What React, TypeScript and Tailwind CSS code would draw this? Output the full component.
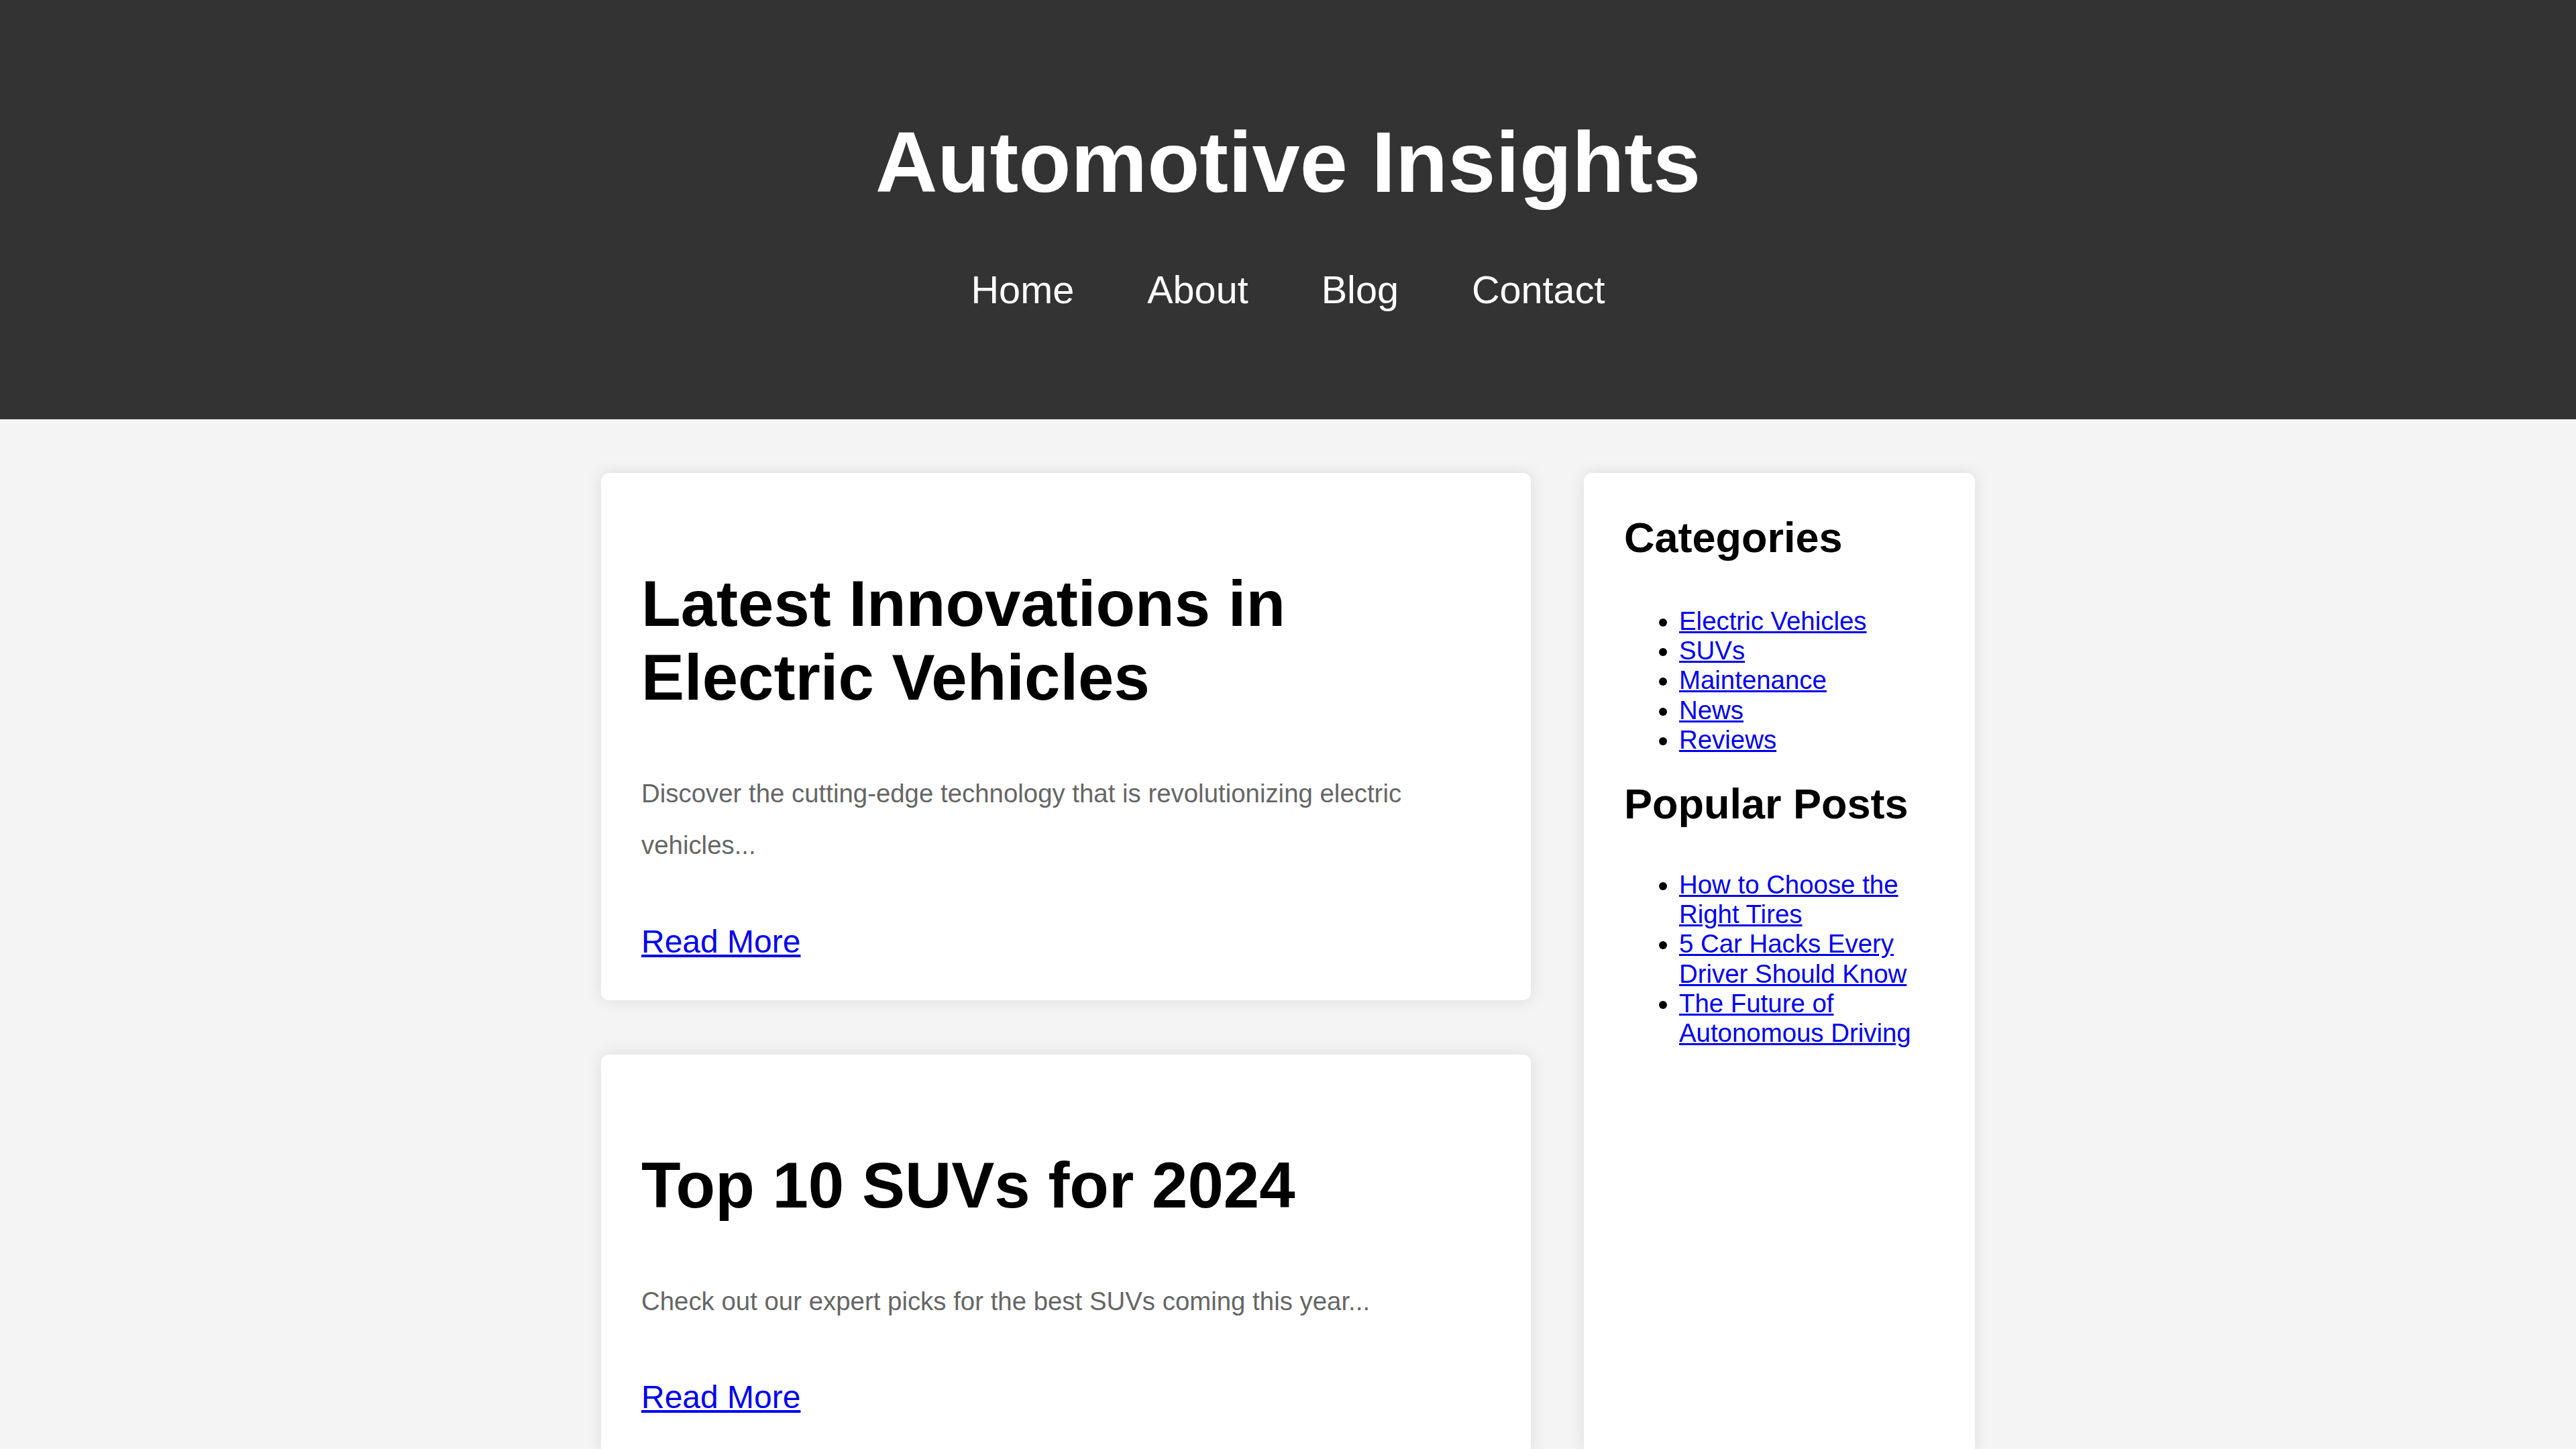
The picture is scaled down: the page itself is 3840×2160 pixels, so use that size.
const posts = [
  {
    title: "Latest Innovations in Electric Vehicles",
    excerpt:
      "Discover the cutting-edge technology that is revolutionizing electric vehicles...",
  },
  {
    title: "Top 10 SUVs for 2024",
    excerpt: "Check out our expert picks for the best SUVs coming this year...",
  },
];

const categories = [
  "Electric Vehicles",
  "SUVs",
  "Maintenance",
  "News",
  "Reviews",
];

const popular = [
  "How to Choose the Right Tires",
  "5 Car Hacks Every Driver Should Know",
  "The Future of Autonomous Driving",
];

const navLinks = ["Home", "About", "Blog", "Contact"];

function PostCard({ title, excerpt }: { title: string; excerpt: string }) {
  return (
    <article className="bg-white rounded-[12px] p-[60px] shadow-[0_0_24px_rgba(0,0,0,0.1)]">
      <h2 className="mt-[80px] text-[96px] leading-[110px] font-bold text-black">
        {title}
      </h2>
      <p className="mt-[80px] text-[38.4px] leading-[76.8px] text-[#666]">
        {excerpt}
      </p>
      <div className="mt-[78px] text-[48px] leading-[54px]">
        <a href="#" className="text-[#0000ee] underline">
          Read More
        </a>
      </div>
    </article>
  );
}

function LinkList({ items }: { items: string[] }) {
  return (
    <ul className="list-disc pl-[82px] text-[38.4px] leading-[44.2px] text-black">
      {items.map((item) => (
        <li key={item}>
          <a href="#" className="text-[#0000ee] underline">
            {item}
          </a>
        </li>
      ))}
    </ul>
  );
}

export default function App() {
  return (
    <div className="min-h-screen bg-[#f4f4f4] font-['Liberation_Sans',Arial,sans-serif]">
      {/* header */}
      <header className="bg-[#333] text-white text-center pt-[168px] pb-[160px]">
        <h1 className="text-[128px] leading-[147px] font-bold">
          Automotive Insights
        </h1>
        <nav className="mt-[84px] flex justify-center gap-[109px] text-[57.6px] leading-[66px]">
          {navLinks.map((link) => (
            <a key={link} href="#" className="text-white">
              {link}
            </a>
          ))}
        </nav>
      </header>

      {/* content */}
      <div className="w-[2048px] mx-auto mt-[80px] flex gap-[79px]">
        <main className="w-[1386px] flex flex-col gap-[81px]">
          {posts.map((post) => (
            <PostCard key={post.title} {...post} />
          ))}
        </main>

        <aside className="w-[583px] bg-white rounded-[12px] p-[60px] shadow-[0_0_24px_rgba(0,0,0,0.1)]">
          <h3 className="text-[63px] leading-[72px] font-bold mb-[67px]">
            Categories
          </h3>
          <LinkList items={categories} />
          <h3 className="mt-[37px] text-[63px] leading-[72px] font-bold mb-[63px]">
            Popular Posts
          </h3>
          <LinkList items={popular} />
        </aside>
      </div>
    </div>
  );
}
